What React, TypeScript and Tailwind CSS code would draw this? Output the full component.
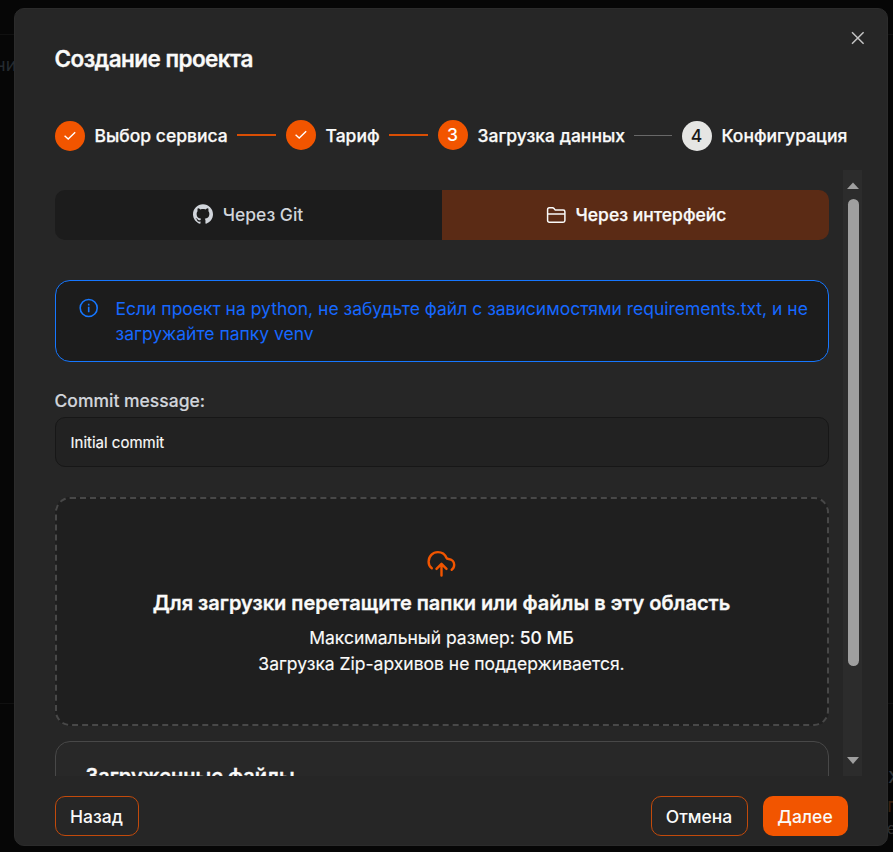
import { ReactNode } from "react";
import { SiGithub } from "react-icons/si";

function Check() {
  return (
    <svg className="size-5" viewBox="0 0 20 20" fill="none" stroke="currentColor" strokeWidth="1.4">
      <path d="M4.6 9.8 8.2 13 15.2 6.2" />
    </svg>
  );
}

function Step({ label, width, badge, pending = false, raised = false }: { label: string; width: string; badge: ReactNode; pending?: boolean; raised?: boolean }) {
  return (
    <div className="flex shrink-0 items-center gap-[10px]">
      <div className={`flex size-[30px] items-center justify-center rounded-full text-[17.5px] font-medium ${raised ? "-mt-[2px]" : ""} ${pending ? "bg-[#e5e5e3] text-[#171717]" : "bg-[#f25500] text-white"}`}>{badge}</div>
      <span className={`whitespace-nowrap pt-[2px] text-[17.5px] font-medium [-webkit-text-stroke:0.25px_currentColor] ${width}`}>{label}</span>
    </div>
  );
}

function FolderIcon() {
  return (
    <svg className="h-[18px] w-5" viewBox="0 0 20 18" fill="none" stroke="currentColor" strokeWidth="1.5" strokeLinejoin="round">
      <path d="M1.6 14.6V3.6C1.6 2.5 2.3 1.8 3.3 1.8h3.2c.7 0 1.1.2 1.5.7l1.3 1.6h7.9c1 0 1.7.7 1.7 1.7v8.8c0 1-.7 1.7-1.7 1.7H3.3c-1 0-1.7-.7-1.7-1.7Z" />
      <path d="M1.6 8h17.3" />
    </svg>
  );
}

function UploadIcon() {
  return (
    <svg className="h-[27px] w-[29px]" viewBox="0 0 29 27" fill="none" stroke="#f25500" strokeWidth="2.4" strokeLinecap="round" strokeLinejoin="round">
      <path d="M4.8 18.2C2.7 16.7 1.6 14.5 1.6 11.7c0-5.4 4.1-9.6 9.3-9.6 4 0 7.1 2.2 8.5 5.7.5 1.2.9 1.2 2.1 1.2 3.4.2 5.7 2.7 5.7 5.8 0 2.1-.9 3.8-2.5 4.9" />
      <path d="M14.5 25.5V13.9M9.5 18.9l5-5.1 5 5.1" />
    </svg>
  );
}

export default function App() {
  return (
    <div className="relative h-[852px] w-[893px] overflow-hidden bg-[#060606] font-['Inter','Liberation_Sans',sans-serif] text-[#fafaf9]">
      <div className="absolute left-0 top-0 h-[35px] w-full border-b border-[#101010]" />
      <div className="absolute left-0 top-[703px] h-px w-full bg-[#101010]" />
      <div className="absolute left-[-5px] top-[51px] text-[18px] text-[#252b30]">ни</div>
      <div className="absolute left-[888px] top-[759px] text-[22px] text-[#30363b]">х</div>
      <div className="absolute left-[887px] top-[790px] text-[20px] text-[#37200f]">п</div>
      <div className="absolute left-[887px] top-[818px] text-[15px] text-[#303030]">е</div>

      <div className="absolute left-[14px] top-[7.5px] flex h-[838px] w-[874px] flex-col rounded-[10px] border border-[#2b2b2b] bg-[#262626] pl-[39.5px]">
        <svg className="absolute left-[834.5px] top-[21.5px] size-4" viewBox="0 0 16 16" fill="none" stroke="#c4c4c4" strokeWidth="1.5">
          <path d="M2 2.2 13.6 13.8M13.6 2.2 2 13.8" />
        </svg>
        <h1 className="mt-[34px] text-[22.5px] font-semibold leading-8 tracking-[-0.56px] [-webkit-text-stroke:0.3px_currentColor]">Создание проекта</h1>

        <div className="mt-[46px] flex h-[30px] w-[793px] items-center justify-between">
          <Step label="Выбор сервиса" width="w-[133px]" badge={<Check />} />
          <div className="-mt-[2px] h-[2px] w-[38.5px] bg-[#d94e04]" />
          <Step label="Тариф" width="w-[54px]" badge={<Check />} raised />
          <div className="-mt-[2px] h-[2px] w-[38.5px] bg-[#d94e04]" />
          <Step label="Загрузка данных" width="w-[147px]" badge={<span className="pt-[2px]">3</span>} raised />
          <div className="h-px w-[37.5px] bg-[#686868]" />
          <Step label="Конфигурация" width="w-[126px]" badge={<span className="pt-px">4</span>} pending />
        </div>

        <div className="mt-[19px] flex h-[606px] w-[807.5px] justify-between overflow-hidden">
          <div className="w-[774px] pt-5">
            <div className="flex h-[50px] overflow-hidden rounded-[10px]">
              <button className="flex w-1/2 items-center justify-center gap-[10px] bg-[#1c1c1c] text-[17.5px] font-medium text-[#d1d5db]">
                <SiGithub size={20} className="-mt-px" />
                <span className="pt-px">Через Git</span>
              </button>
              <button className="flex w-1/2 items-center justify-center gap-[10px] bg-[#5b2b15] pl-[2px] text-[17.5px] font-medium">
                <FolderIcon />
                <span className="pt-px [-webkit-text-stroke:0.25px_currentColor]">Через интерфейс</span>
              </button>
            </div>

            <div className="mt-10 flex h-[82px] rounded-[15px] border border-[#1677ff] bg-[#1c1c1c] pl-[23px] pt-[15px] text-[17.5px] leading-[25px] text-[#1668ff]">
              <svg className="mt-[2.5px] size-5 shrink-0" viewBox="0 0 20 20" fill="none" stroke="#1677ff" strokeWidth="1.6">
                <circle cx="9.7" cy="10" r="8.5" />
                <path d="M9.7 8.8v5.4M9.7 5.8v1.7" />
              </svg>
              <p className="ml-[17px] w-[695px]">
                Если проект на python, не забудьте файл с зависимостями requirements.txt, и не
                <br />
                загружайте папку venv
              </p>
            </div>

            <label className="mt-[26px] block text-[17.5px] font-medium leading-[25px] text-[#d1d5db] [-webkit-text-stroke:0.15px_currentColor]">Commit message:</label>
            <input
              className="mt-1 block h-[50px] w-full rounded-[10px] border border-[#171717] bg-[#222] px-[15px] pt-[2px] text-[15px] [-webkit-text-stroke:0.15px_currentColor]"
              defaultValue="Initial commit"
            />

            <div className="mt-[30px] flex h-[229px] flex-col items-center rounded-[15px] border-2 border-dashed border-[#484848] bg-[#1f1f1f] pt-[51px]">
              <UploadIcon />
              <p className="mt-[12px] text-[20px] font-semibold leading-[28px] [-webkit-text-stroke:0.3px_currentColor]">Для загрузки перетащите папки или файлы в эту область</p>
              <p className="mt-[8px] text-[17.5px] leading-[26px] [-webkit-text-stroke:0.15px_currentColor]">
                Максимальный размер: <span className="font-medium">50 МБ</span>
              </p>
              <p className="text-[17.5px] leading-[26px] [-webkit-text-stroke:0.15px_currentColor]">Загрузка Zip-архивов не поддерживается.</p>
            </div>

            <div className="mt-[15px] h-[120px] rounded-[15px] border border-[#484848] bg-[#282828] pl-[30px] pt-[20px]">
              <h2 className="text-[20px] font-semibold leading-[28px] [-webkit-text-stroke:0.3px_currentColor]">Загруженные файлы</h2>
            </div>
          </div>

          <div className="flex w-[19px] flex-col items-start bg-[#2c2c2c]">
            <svg className="ml-[4px] mt-[12px] h-[7px] w-3 shrink-0" viewBox="0 0 12 7" fill="#9f9f9f"><path d="M6 0.5 12 7H0Z" /></svg>
            <div className="ml-[5px] mt-[10px] h-[467px] w-[11px] rounded-full bg-[#9f9f9f]" />
            <svg className="mb-[12px] ml-[4px] mt-auto h-[7px] w-3 shrink-0" viewBox="0 0 12 7" fill="#9f9f9f"><path d="M0 0H12L6 7Z" /></svg>
          </div>
        </div>

        <div className="mt-5 flex h-10 w-[793px] gap-[15px] text-[17.5px] font-medium">
          <button className="mr-auto w-[84px] rounded-[10px] border border-[#c24a0b] pt-[3px]">Назад</button>
          <button className="w-[97px] rounded-[10px] border border-[#c24a0b] pt-[3px]">Отмена</button>
          <button className="w-[85px] rounded-[10px] bg-[#f25500] pt-[3px]">Далее</button>
        </div>
      </div>
    </div>
  );
}
